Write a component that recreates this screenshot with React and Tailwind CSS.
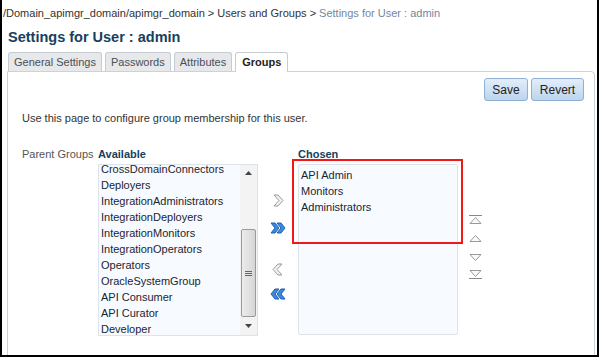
import React from "react";

const available = [
  "CrossDomainConnectors",
  "Deployers",
  "IntegrationAdministrators",
  "IntegrationDeployers",
  "IntegrationMonitors",
  "IntegrationOperators",
  "Operators",
  "OracleSystemGroup",
  "API Consumer",
  "API Curator",
  "Developer",
];

const chosen = ["API Admin", "Monitors", "Administrators"];

function Single({ dir, color }) {
  const pts = dir === "right" ? "2,1 6,1 11,6.5 6,12 2,12 7,6.5" : "10,1 6,1 1,6.5 6,12 10,12 5,6.5";
  return (
    <svg width="12" height="13" viewBox="0 0 12 13">
      <polygon points={pts} fill="#f2f2f2" stroke={color} strokeWidth="1" />
    </svg>
  );
}

function Double({ dir }) {
  const a = dir === "right" ? "1,1 5,1 9,6 5,11 1,11 5,6" : "15,1 11,1 7,6 11,11 15,11 11,6";
  const b = dir === "right" ? "7,1 11,1 15,6 11,11 7,11 11,6" : "9,1 5,1 1,6 5,11 9,11 5,6";
  return (
    <svg width="16" height="12" viewBox="0 0 16 12">
      <polygon points={a} fill="#3d8be0" stroke="#1d5fb0" strokeWidth="1" />
      <polygon points={b} fill="#3d8be0" stroke="#1d5fb0" strokeWidth="1" />
    </svg>
  );
}

function Reorder({ kind }) {
  return (
    <svg width="13" height="10" viewBox="0 0 13 10">
      {kind === "top" && <line x1="0" y1="0.5" x2="13" y2="0.5" stroke="#888" />}
      {(kind === "top" || kind === "up") && (
        <polygon points="1,8.5 6.5,2.5 12,8.5" fill="#fafafa" stroke="#999" />
      )}
      {(kind === "down" || kind === "bottom") && (
        <polygon points="1,1.5 6.5,7.5 12,1.5" fill="#fafafa" stroke="#999" />
      )}
      {kind === "bottom" && <line x1="0" y1="9.5" x2="13" y2="9.5" stroke="#888" />}
    </svg>
  );
}

export default function App() {
  return (
    <div
      className="w-[599px] h-[357px] overflow-hidden bg-white border-l-2 border-r-2 border-b-2 border-black text-[11px] text-[#333]"
      style={{ fontFamily: "'Liberation Sans', Arial, sans-serif" }}
    >
      {/* breadcrumb */}
      <div className="pl-[1px] pt-[5px] h-[22px] leading-[16px] text-[11px] whitespace-nowrap">
        <span className="text-[#333]">/Domain_apimgr_domain/apimgr_domain &gt; Users and Groups &gt; </span>
        <span className="text-[#7486a0]">Settings for User : admin</span>
      </div>

      <h1 className="pl-[6px] h-[30px] pt-[6px] leading-[18px] text-[14.5px] font-bold text-[#16405e]">
        Settings for User : admin
      </h1>

      {/* tabs */}
      <div className="flex pl-[6px] gap-[3px] h-[19px] relative z-10 text-[11px]">
        <div className="px-[5px] border border-b-0 border-[#c5ccd4] rounded-t-[3px] bg-[#e6e8ea] text-[#4a4f55] leading-[18px]">
          General Settings
        </div>
        <div className="px-[5px] border border-b-0 border-[#c5ccd4] rounded-t-[3px] bg-[#e6e8ea] text-[#4a4f55] leading-[18px]">
          Passwords
        </div>
        <div className="px-[5px] border border-b-0 border-[#c5ccd4] rounded-t-[3px] bg-[#e6e8ea] text-[#4a4f55] leading-[18px]">
          Attributes
        </div>
        <div className="px-[6px] h-[20px] border border-b-0 border-[#c5ccd4] rounded-t-[3px] bg-white text-[#222] font-bold leading-[19px]">
          Groups
        </div>
      </div>

      {/* panel */}
      <div className="relative ml-[5px] w-[588px] h-[300px] border border-[#c9d3de] rounded-tr-[4px]">
        <div className="flex justify-end gap-[3px] pr-[10px] pt-[6px]">
          <button className="h-[23px] w-[44px] text-[12px] text-[#222] rounded-[3px] border border-[#8eb0d2] bg-gradient-to-b from-[#e3eefa] to-[#bcd4ee]">
            Save
          </button>
          <button className="h-[23px] w-[53px] text-[12px] text-[#222] rounded-[3px] border border-[#8eb0d2] bg-gradient-to-b from-[#e3eefa] to-[#bcd4ee]">
            Revert
          </button>
        </div>

        <p className="pl-[14px] mt-[10px] leading-[14px] text-[11px] text-[#333]">
          Use this page to configure group membership for this user.
        </p>

        <div className="flex mt-[22px] pl-[14px]">
          <div className="w-[76px] whitespace-nowrap text-[11px] text-[#555] leading-[14px]">Parent Groups</div>

          {/* available */}
          <div className="flex flex-col">
            <div className="h-[17px] leading-[14px] text-[11px] font-bold text-[#16405e]">Available</div>
            <div className="flex w-[160px] h-[172px] border border-[#dde3ea] bg-[#f7fbff]">
              <div className="flex-1 overflow-hidden pl-[2px] text-[11px] text-[#1c2430] leading-[16px] -mt-[4px]">
                {available.map((g) => (
                  <div key={g} className="h-[16px] whitespace-nowrap">
                    {g}
                  </div>
                ))}
              </div>
              <div className="w-[17px] bg-[#f3f3f3] flex flex-col items-center">
                <div className="h-[16px] flex items-center justify-center">
                  <svg width="7" height="4" viewBox="0 0 7 4"><polygon points="0,4 3.5,0 7,4" fill="#444" /></svg>
                </div>
                <div className="mt-[48px] w-[15px] h-[88px] rounded-[2px] border border-[#9a9a9a] bg-gradient-to-r from-[#ececec] to-[#d6d6d6] flex items-center justify-center">
                  <div className="flex flex-col gap-[1px]">
                    <div className="w-[7px] h-[1px] bg-[#666]" />
                    <div className="w-[7px] h-[1px] bg-[#666]" />
                    <div className="w-[7px] h-[1px] bg-[#666]" />
                  </div>
                </div>
                <div className="flex-1 flex items-center justify-center">
                  <svg width="7" height="4" viewBox="0 0 7 4"><polygon points="0,0 3.5,4 7,0" fill="#444" /></svg>
                </div>
              </div>
            </div>
          </div>

          {/* shuttle buttons */}
          <div className="w-[40px] flex flex-col items-center pt-[47px]">
            <Single dir="right" color="#9a9a9a" />
            <div className="mt-[15px]"><Double dir="right" /></div>
            <div className="mt-[29px]"><Single dir="left" color="#9a9a9a" /></div>
            <div className="mt-[12px]"><Double dir="left" /></div>
          </div>

          {/* chosen */}
          <div className="flex flex-col">
            <div className="h-[17px] leading-[14px] text-[11px] font-bold text-[#16405e]">Chosen</div>
            <div className="w-[160px] h-[171px] border border-[#dde3ea] rounded-[2px] bg-[#f7fbff] pl-[2px] pt-[2px] text-[11px] text-[#1c2430] leading-[16px]">
              {chosen.map((g) => (
                <div key={g} className="h-[16px]">{g}</div>
              ))}
            </div>
          </div>

          {/* reorder */}
          <div className="flex flex-col pl-[11px] pt-[68px]">
            <Reorder kind="top" />
            <div className="mt-[8px]"><Reorder kind="up" /></div>
            <div className="mt-[10px]"><Reorder kind="down" /></div>
            <div className="mt-[6px]"><Reorder kind="bottom" /></div>
          </div>
        </div>

        {/* highlight box */}
        <div className="absolute left-[284px] top-[87px] w-[171px] h-[85px] border-2 border-[#f01818]" />
      </div>
    </div>
  );
}
